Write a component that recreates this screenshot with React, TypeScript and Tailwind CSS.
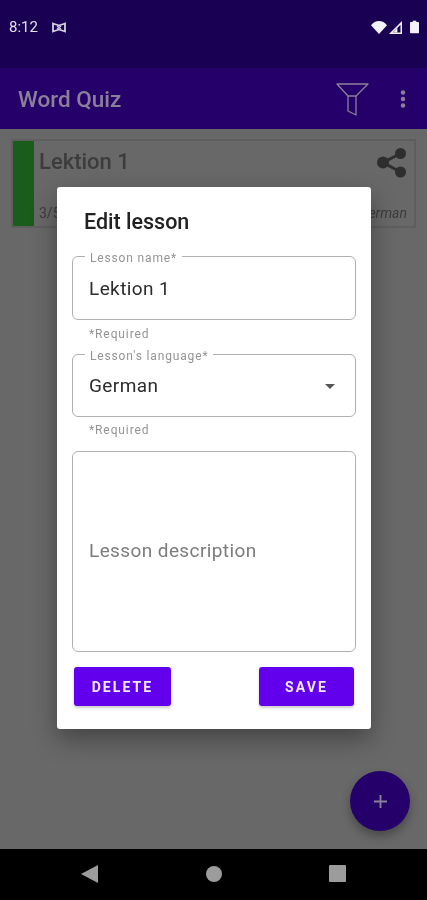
const font = "font-['Roboto',sans-serif]";

function StatusBar() {
  return (
    <div className="flex h-[68px] shrink-0 items-start justify-between bg-[#1a0052] pl-[9px] pr-[8px] pt-[17px]">
      <div className="flex items-center gap-[14px]">
        <span className="text-[15px] leading-[20px] text-[#e4e0ea]">8:12</span>
        <svg width="14" height="11" viewBox="0 0 14 11" fill="none" stroke="#d5d0e0" strokeWidth="1.8">
          <path d="M1 1.5C3.5 2.5 4.5 2.5 7 3.5C9.5 2.5 10.5 2.5 13 1.5V9.5C10.5 8.5 9.5 8.5 7 7.5C4.5 8.5 3.5 8.5 1 9.5Z" />
          <path d="M5 4l4 3M9 4l-4 3" strokeWidth="1.2" />
        </svg>
      </div>
      <div className="flex items-center pt-[3px]">
        <svg className="mr-[2px]" width="16" height="13" viewBox="0 0 16 13" fill="#f4f2f8">
          <path d="M0 4.2C2 1.6 5 0 8 0s6 1.6 8 4.2L8 13z" />
        </svg>
        <svg className="mr-[8px]" width="13" height="13" viewBox="0 0 14 14">
          <path d="M14 0V14H0Z" fill="#f4f2f8" />
          <path d="M12.4 4V12.4H4Z" fill="#1a0052" />
          <path d="M9 7.6V12.4H4.4Z" fill="#f4f2f8" />
        </svg>
        <svg width="9" height="14" viewBox="0 0 10 14" fill="#f4f2f8">
          <path d="M3 0H7V1.4H9.2a.8.8 0 0 1 .8.8V13.2a.8.8 0 0 1-.8.8H.8a.8.8 0 0 1-.8-.8V2.2a.8.8 0 0 1 .8-.8H3z" />
        </svg>
      </div>
    </div>
  );
}

function AppBar() {
  return (
    <div className="flex h-[61px] shrink-0 items-center bg-[#25006a] pl-[18px] pr-[21px]">
      <span className="flex-1 pt-[2px] text-[22.5px] font-medium text-[#8a8196]">Word Quiz</span>
      <svg className="mr-[31px]" width="33" height="34" viewBox="0 0 33 34" fill="none" stroke="#8a8196" strokeWidth="1.3">
        <path d="M1 2H32L20 14H12Z" strokeLinejoin="round" />
        <path d="M12 14V29L20 33V14" strokeLinejoin="round" />
      </svg>
      <svg width="6" height="18" viewBox="0 0 6 18" fill="#8a8196">
        <circle cx="3" cy="2.5" r="2.2" />
        <circle cx="3" cy="9" r="2.2" />
        <circle cx="3" cy="15.5" r="2.2" />
      </svg>
    </div>
  );
}

function LessonCard() {
  return (
    <div className="mx-[11px] mt-[10px] flex h-[89px] border-2 border-[#5e5e5e] bg-[#686868]">
      <div className="w-[21px] shrink-0 bg-[#1a5c1a]" />
      <div className="flex min-w-0 flex-1 flex-col pl-[5px] pr-[7px]">
        <div className="flex items-start justify-between">
          <span className="pt-[7px] text-[22px] font-medium leading-[28px] text-[#3c3c3c]">Lektion 1</span>
          <svg className="mt-[7px]" width="30" height="31" viewBox="0 0 30 31" fill="#2e2e2e">
            <circle cx="23.5" cy="5.5" r="5.5" />
            <circle cx="6" cy="14.5" r="6" />
            <circle cx="23.5" cy="24" r="5.5" />
            <path d="M23.5 5.5L6 14.5L23.5 24" fill="none" stroke="#2e2e2e" strokeWidth="3" />
          </svg>
        </div>
        <div className="mt-auto flex justify-between pb-[3px] text-[14px] leading-[20px] text-[#3c3c3c]">
          <span>3/5</span>
          <span className="italic">German</span>
        </div>
      </div>
    </div>
  );
}

function OutlinedField({ label, height, children }: { label: string; height: string; children: React.ReactNode }) {
  return (
    <div className={`relative flex items-center justify-between rounded-[6px] border border-[#b0b0b0] pl-[16px] pr-[20px] pt-[2px] ${height}`}>
      <span className="absolute left-[12px] top-[-6px] bg-white px-[5px] text-[12px] leading-[14px] tracking-[0.85px] text-[#949494]">
        {label}
      </span>
      {children}
    </div>
  );
}

function EditDialog() {
  return (
    <div className="absolute left-[57px] top-[187px] flex h-[542px] w-[314px] flex-col rounded-[3px] bg-white px-[15px] shadow-[0_10px_24px_rgba(0,0,0,0.35)]">
      <h2 className="pl-[12px] pt-[22px] text-[21.5px] font-medium leading-[26px] text-[#222222]">Edit lesson</h2>
      <div className="mt-[21px]">
        <OutlinedField label="Lesson name*" height="h-[64px]">
          <span className="text-[19px] tracking-[0.4px] text-[#2c2c2c]">Lektion 1</span>
        </OutlinedField>
      </div>
      <p className="pl-[17px] pt-[6px] text-[12px] leading-[16px] tracking-[0.9px] text-[#949494]">*Required</p>
      <div className="mt-[12px]">
        <OutlinedField label="Lesson's language*" height="h-[63px]">
          <span className="text-[19px] tracking-[0.4px] text-[#2c2c2c]">German</span>
          <svg width="10" height="5" viewBox="0 0 10 5" fill="#555555">
            <path d="M0 0H10L5 5Z" />
          </svg>
        </OutlinedField>
      </div>
      <p className="pl-[17px] pt-[5px] text-[12px] leading-[16px] tracking-[0.9px] text-[#949494]">*Required</p>
      <div className="mt-[13px] flex h-[201px] items-center rounded-[6px] border border-[#b0b0b0] pl-[16px]">
        <span className="text-[19px] tracking-[0.4px] text-[#7c7c7c]">Lesson description</span>
      </div>
      <div className="mt-[15px] flex justify-between px-[2px]">
        <button className="h-[39px] w-[97px] rounded-[3px] bg-[#6200ee] pt-[1px] text-[14px] font-bold tracking-[2.1px] text-[#f1e8fd] shadow-[0_2px_3px_rgba(0,0,0,0.2)]">
          DELETE
        </button>
        <button className="h-[39px] w-[95px] rounded-[3px] bg-[#6200ee] pt-[1px] text-[14px] font-bold tracking-[2.1px] text-[#f1e8fd] shadow-[0_2px_3px_rgba(0,0,0,0.2)]">
          SAVE
        </button>
      </div>
    </div>
  );
}

function NavBar() {
  return (
    <div className="flex h-[51px] shrink-0 items-center bg-black pb-[2px] pl-[81px] pr-[81px]">
      <div className="flex w-full items-center justify-between">
        <svg width="17" height="18" viewBox="0 0 17 18" fill="#9c9c9c">
          <path d="M17 0V18L0 9Z" />
        </svg>
        <div className="h-[16px] w-[16px] rounded-full bg-[#9c9c9c]" />
        <div className="h-[17px] w-[17px] rounded-[1px] bg-[#9c9c9c]" />
      </div>
    </div>
  );
}

export default function App() {
  return (
    <div className={`relative flex h-[900px] w-[427px] flex-col overflow-hidden bg-[#686868] blur-[0.4px] ${font}`}>
      <StatusBar />
      <AppBar />
      <div className="min-h-0 flex-1">
        <LessonCard />
      </div>
      <NavBar />
      <EditDialog />
      <div className="absolute left-[350px] top-[771px] flex h-[60px] w-[60px] items-center justify-center rounded-full bg-[#25006a] shadow-[0_5px_10px_rgba(0,0,0,0.3)]">
        <svg width="13" height="13" viewBox="0 0 14 14" stroke="#8a8196" strokeWidth="2">
          <path d="M7 0V14M0 7H14" />
        </svg>
      </div>
    </div>
  );
}
